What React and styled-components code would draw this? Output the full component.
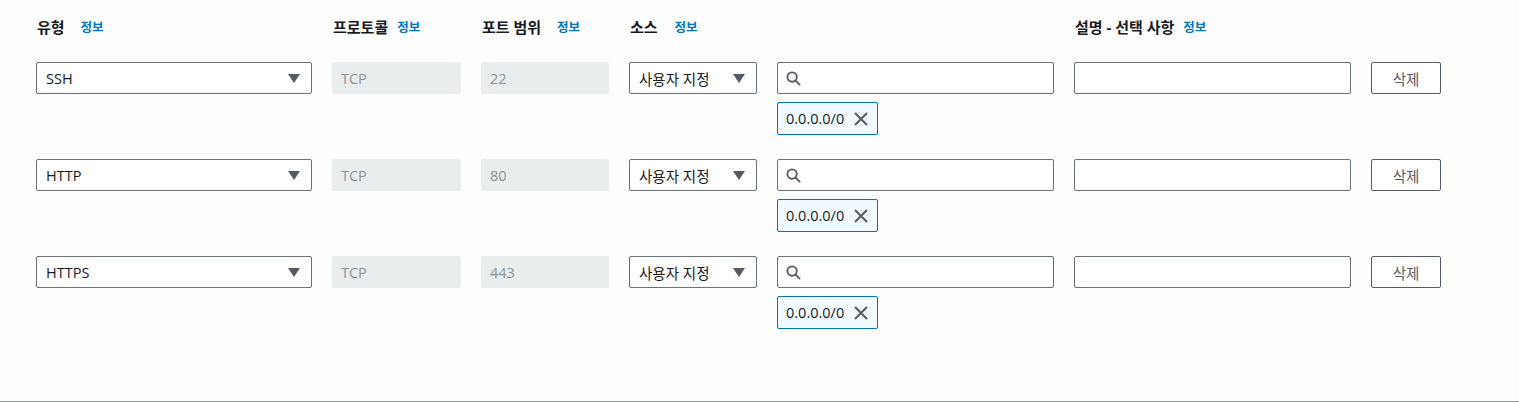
import React from "react";
import styled, { createGlobalStyle } from "styled-components";

const GlobalStyle = createGlobalStyle`
  body {
    margin: 0;
    background: #fefefe;
    font-family: "Open Sans", "Noto Sans CJK KR", sans-serif;
    color: #16191f;
  }
`;

const rules = [
  { type: "SSH", port: "22" },
  { type: "HTTP", port: "80" },
  { type: "HTTPS", port: "443" },
];

const headers = [
  { label: "유형", gap: 16 },
  { label: "프로토콜", gap: 9 },
  { label: "포트 범위", gap: 16 },
  { label: "소스", gap: 17 },
  { label: "" },
  { label: "설명 - 선택 사항", gap: 9 },
  { label: "" },
];

const Caret = () => (
  <svg width="12" height="9" viewBox="0 0 12 9">
    <path d="M0 0h12L6 9z" fill="#545b64" />
  </svg>
);

const SearchIcon = () => (
  <svg width="15" height="15" viewBox="0 0 16 16" fill="none" stroke="#545b64" strokeWidth="2">
    <circle cx="6.5" cy="6.5" r="5" />
    <path d="M10.2 10.2L14.5 14.5" strokeLinecap="round" />
  </svg>
);

const CloseIcon = () => (
  <svg width="14" height="14" viewBox="0 0 14 14" stroke="#545b64" strokeWidth="2">
    <path d="M1 1l12 12M13 1L1 13" />
  </svg>
);

const App = () => {
  return (
    <Page>
      <GlobalStyle />
      <Table>
        {headers.map((h, i) => (
          <Header key={i}>
            {h.label && <Label>{h.label}</Label>}
            {h.label && <Info $gap={h.gap}>정보</Info>}
          </Header>
        ))}
        {rules.map((r) => (
          <React.Fragment key={r.type}>
            <Select>
              <span>{r.type}</span>
              <Caret />
            </Select>
            <Disabled>TCP</Disabled>
            <Disabled>{r.port}</Disabled>
            <Select>
              <span>사용자 지정</span>
              <Caret />
            </Select>
            <SourceCell>
              <Search>
                <SearchIcon />
              </Search>
              <Token>
                <span>0.0.0.0/0</span>
                <CloseIcon />
              </Token>
            </SourceCell>
            <TextBox />
            <DeleteButton>삭제</DeleteButton>
          </React.Fragment>
        ))}
      </Table>
    </Page>
  );
};

const Page = styled.div`
  box-sizing: border-box;
  min-height: 402px;
  padding: 15px 36px 0;
  border-bottom: 1px solid #879596;
`;

const Table = styled.div`
  display: grid;
  grid-template-columns: 276px 129px 128px 128px 277px 277px 70px;
  column-gap: 20px;
  row-gap: 24px;
  align-items: start;
`;

const Header = styled.div`
  display: flex;
  align-items: center;
  height: 23px;
  padding-left: 1px;
`;

const Label = styled.span`
  font-size: 15px;
  font-weight: 700;
  color: #16191f;
`;

const Info = styled.span`
  margin-left: ${(p) => p.$gap}px;
  font-size: 12.5px;
  font-weight: 700;
  color: #0073bb;
`;

const Field = styled.div`
  box-sizing: border-box;
  height: 32px;
  display: flex;
  align-items: center;
  font-size: 14.5px;
`;

const Select = styled(Field)`
  justify-content: space-between;
  padding: 0 11px 0 9px;
  border: 1px solid #687078;
  border-radius: 2px;
  background: #fff;
  color: #16191f;
`;

const Disabled = styled(Field)`
  padding: 0 9px;
  background: #eaeded;
  border-radius: 2px;
  color: #879596;
`;

const SourceCell = styled.div`
  display: flex;
  flex-direction: column;
  align-items: flex-start;
  gap: 8px;
`;

const Search = styled(Field)`
  width: 100%;
  padding: 0 8px;
  border: 1px solid #687078;
  border-radius: 2px;
  background: #fff;
`;

const TextBox = styled(Field)`
  border: 1px solid #687078;
  border-radius: 2px;
  background: #fff;
`;

const Token = styled.div`
  box-sizing: border-box;
  height: 33px;
  width: 101px;
  display: flex;
  align-items: center;
  justify-content: space-between;
  padding: 0 9px 0 8px;
  border: 1px solid #0073bb;
  border-radius: 2px;
  background: #f1faff;
  font-size: 14.5px;
  color: #16191f;
`;

const DeleteButton = styled.button`
  box-sizing: border-box;
  height: 32px;
  width: 70px;
  border: 1px solid #545b64;
  border-radius: 2px;
  background: #fff;
  color: #545b64;
  font-family: inherit;
  font-size: 14.5px;
  padding: 0;
`;

export default App;
